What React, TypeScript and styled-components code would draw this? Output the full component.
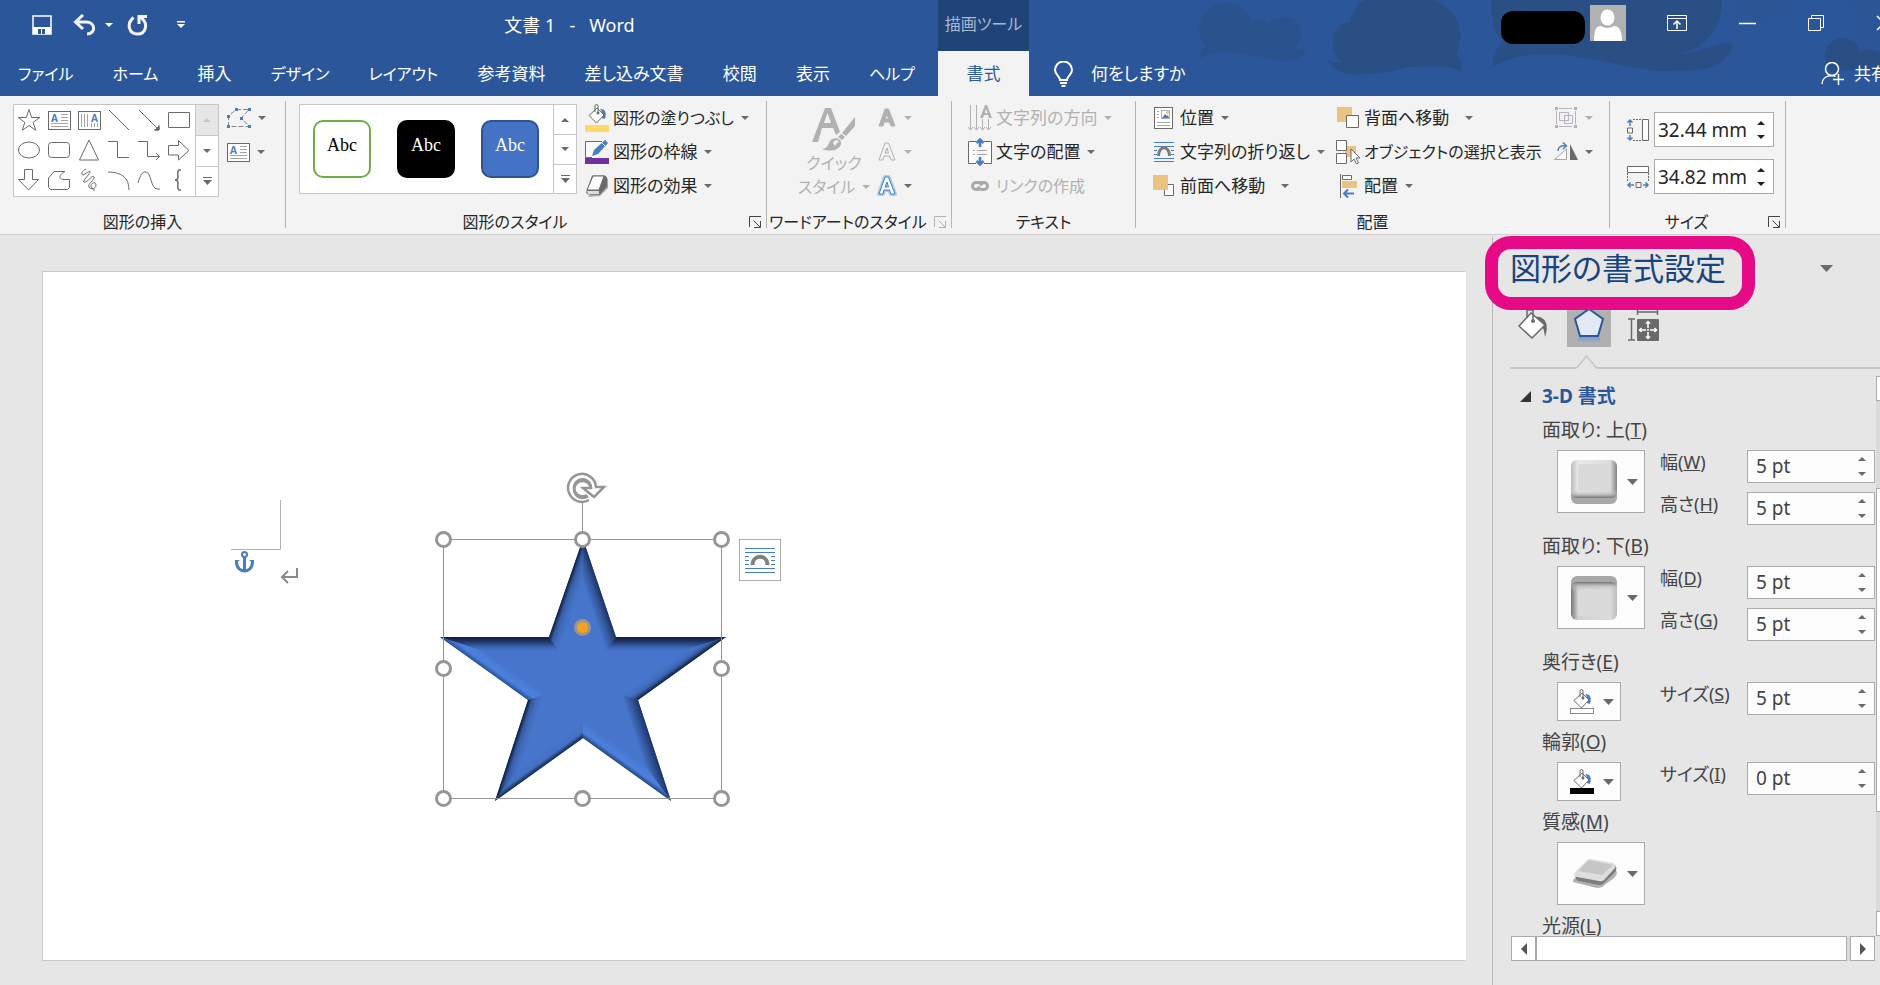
import React from 'react';
import styled, { createGlobalStyle } from 'styled-components';

const GlobalStyle = createGlobalStyle`
  * { box-sizing: border-box; }
  body {
    margin: 0;
    background: #e6e6e6;
    font-family: "Noto Sans", "Noto Sans CJK JP", sans-serif;
    font-size: 17px;
    line-height: 24px;
    color: #262626;
    font-feature-settings: "palt";
  }
  button, input { font: inherit; color: inherit; font-feature-settings: inherit; }
  button { padding: 0; border: 0; background: none; white-space: nowrap; cursor: pointer; }
  svg { display: block; flex: none; }
`;

/* ---------- Shell ---------- */

const Shell = styled.div`
  display: flex;
  flex-direction: column;
  height: 100vh;
  overflow: hidden;
`;

const Header = styled.header`
  position: relative;
  display: flex;
  flex: none;
  height: 96px;
  overflow: hidden;
  background: #2b579a;
  color: #fff;
`;

const HeaderArt = styled.svg`
  position: absolute;
  top: 0;
  right: 0;
`;

const HeaderLeft = styled.div`
  position: relative;
  flex: 0 0 938px;
`;

const TitleBar = styled.div`
  display: flex;
  align-items: center;
  height: 51px;
  padding-bottom: 2px;
`;

const QuickAccess = styled.div`
  display: flex;
  align-items: center;
  width: 201px;
  padding-left: 32px;
`;

const QuickButton = styled.button<{ $gap: number }>`
  margin-right: ${(p) => p.$gap}px;
`;

const DocTitle = styled.h1`
  flex: 1;
  margin: 0;
  font-size: 18px;
  font-weight: 400;
  text-align: center;
  white-space: pre;
`;

const TabList = styled.nav`
  display: flex;
  justify-content: space-between;
  height: 45px;
  padding: 0 23px 0 18px;
`;

const Tab = styled.button<{ $dense: boolean }>`
  font-size: ${(p) => (p.$dense ? 16 : 17)}px;
`;

const ContextGroup = styled.div`
  position: relative;
  display: flex;
  flex-direction: column;
  flex: 0 0 91px;
`;

const ContextLabel = styled.div`
  height: 51px;
  background: #214478;
  color: #a9b9d3;
  font-size: 16px;
  line-height: 48px;
  text-align: center;
  white-space: nowrap;
`;

const ActiveTab = styled.button`
  height: 45px;
  background: #f3f3f3;
  color: #2b579a;
`;

const HeaderRight = styled.div`
  position: relative;
  flex: 1;
  min-width: 0;
`;

const WindowBar = styled.div`
  display: flex;
  justify-content: flex-end;
  align-items: center;
  height: 51px;
  margin-right: -12px;
  padding-bottom: 5px;
`;

const Account = styled.div`
  display: flex;
  align-items: center;
  gap: 5px;
  margin-right: 41px;
`;

const NamePlate = styled.div`
  width: 84px;
  height: 33px;
  margin-top: 8px;
  border-radius: 12px;
  background: #000;
`;

const WindowButtons = styled.div`
  display: flex;
  align-items: center;
  gap: 52px;
`;

const TellMeBar = styled.div`
  display: flex;
  justify-content: space-between;
  height: 45px;
  margin-right: -8px;
  padding-left: 25px;
`;

const TellMe = styled.button<{ $gap: number }>`
  display: flex;
  align-items: center;
  gap: ${(p) => p.$gap}px;
`;

/* ---------- Ribbon ---------- */

const Ribbon = styled.div`
  display: flex;
  flex: none;
  height: 139px;
  border-bottom: 1px solid #d0cece;
  background: #f3f3f3;
`;

const Group = styled.section<{ $width: number }>`
  display: flex;
  flex-direction: column;
  flex: 0 0 ${(p) => p.$width}px;
  min-width: 0;
`;

const Separator = styled.div`
  flex: none;
  width: 1px;
  height: 127px;
  margin-top: 5px;
  background: #b4b4b4;
`;

const GroupBody = styled.div<{ $top?: number; $left: number; $gap?: number }>`
  display: flex;
  align-items: flex-start;
  gap: ${(p) => p.$gap ?? 8}px;
  height: 114px;
  padding: ${(p) => p.$top ?? 5}px 0 0 ${(p) => p.$left}px;
`;

const GroupFooter = styled.div`
  display: flex;
  align-items: center;
  height: 24px;
`;

const GroupName = styled.div`
  flex: 1;
  font-size: 16px;
  text-align: center;
  white-space: nowrap;
`;

const Launcher = styled.button`
  width: 22px;
  padding-left: 5px;
`;

const Gallery = styled.div<{ $height: number }>`
  display: flex;
  height: ${(p) => p.$height}px;
  margin-top: 3px;
  border: 1px solid #c6c6c6;
  background: #fff;
`;

const ShapeGrid = styled.div`
  display: grid;
  grid-template-columns: repeat(6, 30px);
  grid-auto-rows: 30px;
  width: 181px;
`;

const ShapeCell = styled.button`
  display: grid;
  place-items: center;
`;

const GalleryScroll = styled.div`
  display: grid;
  grid-template-rows: 1fr 1fr 1fr;
  width: 23px;
  border-left: 1px solid #c6c6c6;
`;

const ScrollCell = styled.button<{ $off?: boolean }>`
  display: grid;
  place-items: center;
  background: ${(p) => (p.$off ? '#e6e6e6' : '#fff')};
  & + & { border-top: 1px solid #c6c6c6; }
`;

const StyleList = styled.div`
  display: flex;
  align-items: center;
  gap: 26px;
  width: 253px;
  padding-left: 13px;
`;

const StyleSwatch = styled.button<{ $fill: string; $line: string; $ink: string }>`
  width: 58px;
  height: 58px;
  padding-bottom: 8px;
  border: 2px solid ${(p) => p.$line};
  border-radius: 10px;
  background: ${(p) => p.$fill};
  color: ${(p) => p.$ink};
  font-family: "Liberation Serif", serif;
  font-size: 18px;
`;

const CommandColumn = styled.div<{ $width?: number }>`
  display: flex;
  flex-direction: column;
  align-items: flex-start;
  width: ${(p) => (p.$width ? `${p.$width}px` : 'auto')};
`;

const CommandButton = styled.button<{ $off?: boolean; $split?: boolean; $dense?: boolean }>`
  display: flex;
  align-items: center;
  height: 34px;
  color: ${(p) => (p.$off ? '#b1b1b1' : '#262626')};
  font-size: ${(p) => (p.$dense ? 16 : 17)}px;
  > span { margin: 0 ${(p) => (p.$split ? 16 : 7)}px 0 4px; }
`;

const IconCommand = styled.button`
  display: flex;
  align-items: center;
  gap: 7px;
  height: 34px;
`;

const QuickStyle = styled.button`
  display: flex;
  flex-direction: column;
  align-items: center;
  width: 86px;
  padding-top: 6px;
  color: #b1b1b1;
  font-size: 16px;
  line-height: 24px;
`;

const QuickStyleLine = styled.span`
  display: flex;
  align-items: center;
  gap: 7px;
`;

const SizeList = styled.div`
  display: flex;
  flex-direction: column;
  gap: 12px;
`;

const SizeRow = styled.label`
  display: flex;
  align-items: center;
  gap: 4px;
`;

const SizeBox = styled.span`
  display: flex;
  align-items: center;
  width: 120px;
  height: 35px;
  border: 1px solid #ababab;
  background: #fff;
`;

const SizeInput = styled.input`
  flex: 1;
  min-width: 0;
  padding: 0 0 0 3px;
  border: 0;
  background: none;
  font-size: 19px;
  outline: 0;
`;

const Spin = styled.span<{ $gap: number }>`
  display: flex;
  flex-direction: column;
  gap: ${(p) => p.$gap}px;
  margin-right: 8px;
`;

/* ---------- Document ---------- */

const Workspace = styled.div`
  display: flex;
  flex: 1;
  min-height: 0;
`;

const Desk = styled.main`
  display: flex;
  flex: 1;
  min-width: 0;
  padding: 36px 26px 24px 42px;
`;

const Paper = styled.div`
  position: relative;
  flex: 1;
  overflow: hidden;
  border: 1px solid #c8c8c8;
  border-right-color: #fff;
  background: #fff;
`;

const Placed = styled.div<{ $x: number; $y: number }>`
  position: absolute;
  left: ${(p) => p.$x}px;
  top: ${(p) => p.$y}px;
`;

const LayoutOptions = styled.button`
  display: grid;
  place-items: center;
  width: 42px;
  height: 42px;
  border: 1px solid #ababab;
  background: #fff;
`;

/* ---------- Format pane ---------- */

const Pane = styled.aside`
  position: relative;
  display: flex;
  flex-direction: column;
  flex: 0 0 388px;
  min-width: 0;
  margin-top: 2px;
  padding-left: 17px;
  border-left: 1px solid #b9b9b9;
  color: #444;
`;

const PaneHeader = styled.div`
  display: flex;
  align-items: center;
  justify-content: space-between;
  height: 62px;
  padding-right: 47px;
`;

const PaneTitle = styled.h2`
  margin: 0;
  color: #17447f;
  font-size: 31px;
  font-weight: 400;
  line-height: 40px;
  white-space: nowrap;
`;

const Highlight = styled.div`
  position: absolute;
  top: -1px;
  left: -8px;
  width: 270px;
  height: 74px;
  border: 13px solid #e60a87;
  border-radius: 26px;
`;

const PaneTabs = styled.div`
  display: flex;
  gap: 10px;
  padding: 3px 0 0 3px;
`;

const PaneTab = styled.button<{ $on?: boolean }>`
  display: grid;
  place-items: center;
  width: 44px;
  height: 45px;
  background: ${(p) => (p.$on ? '#b0b0b0' : 'none')};
`;

const Divider = styled.div`
  position: relative;
  height: 22px;
  border-bottom: 2px solid #c6c6c6;
  > svg { position: absolute; left: 66px; bottom: -2px; }
`;

const PaneBody = styled.div`
  display: flex;
  flex: 1;
  min-height: 0;
  gap: 1px;
`;

const Settings = styled.div`
  flex: 1;
  min-width: 0;
  overflow: hidden;
  padding-top: 14px;
  font-size: 18px;
`;

const SectionToggle = styled.button`
  display: flex;
  align-items: center;
  gap: 11px;
  height: 26px;
  padding-left: 10px;
  color: #2b579a;
  font-size: 19px;
  font-weight: 700;
`;

const Caption = styled.div`
  padding: 11px 0 10px 32px;
  font-size: 19px;
  line-height: 20px;
`;

const SettingRow = styled.div`
  display: flex;
  padding-left: 47px;
`;

const PickerCell = styled.div`
  width: 103px;
`;

const Picker = styled.button<{ $small?: boolean }>`
  display: flex;
  align-items: center;
  justify-content: space-between;
  width: ${(p) => (p.$small ? 64 : 88)}px;
  height: ${(p) => (p.$small ? 39 : 63)}px;
  padding: 0 6px 0 ${(p) => (p.$small ? 11 : 12)}px;
  border: 1px solid #ababab;
  background: #fdfdfd;
`;

const Fields = styled.div`
  display: flex;
  flex: 1;
  flex-direction: column;
  gap: 9px;
  min-width: 0;
`;

const Field = styled.div`
  display: flex;
`;

const FieldLabel = styled.label`
  flex: 0 0 87px;
  white-space: nowrap;
`;

const FieldBox = styled.span`
  display: flex;
  flex: 1;
  align-items: center;
  min-width: 0;
  height: 33px;
  border: 1px solid #ababab;
  background: #fdfdfd;
`;

const FieldInput = styled.input`
  flex: 1;
  min-width: 0;
  padding: 0 0 2px 8px;
  border: 0;
  background: none;
  font-size: 19px;
  outline: 0;
`;

const VerticalScroll = styled.div`
  display: flex;
  flex: 0 0 4px;
  flex-direction: column;
  margin-top: 7px;
  overflow: hidden;
  background: #dadada;
`;

const VerticalPart = styled.span<{ $size?: number; $grow?: number; $track?: boolean }>`
  flex: ${(p) => (p.$grow ? `${p.$grow} 1 0` : `0 0 ${p.$size}px`)};
  border: ${(p) => (p.$track ? '0' : '1px solid #ababab')};
  border-right: 0;
  background: ${(p) => (p.$track ? 'none' : '#fff')};
`;

const HorizontalScroll = styled.div`
  display: flex;
  flex: none;
  margin: 0 5px 24px 1px;
  background: #dadada;
`;

const HorizontalButton = styled.button`
  display: grid;
  place-items: center;
  width: 25px;
  height: 25px;
  border: 1px solid #ababab;
  background: #fff;
`;

const HorizontalThumb = styled.span`
  flex: 1;
  margin-right: 3px;
  border: 1px solid #ababab;
  background: #fff;
`;

/* ---------- Icons ---------- */

const GREY = '#6a6a6a';
const BLUE = '#4a7ebb';
const GOLD = '#eac282';

type IconProps = { w: number; h: number; children: React.ReactNode; stroke?: string; sw?: number };
const Icon = ({ w, h, children, stroke = 'none', sw = 1 }: IconProps) => (
  <svg width={w} height={h} viewBox={`0 0 ${w} ${h}`} fill="none" stroke={stroke} strokeWidth={sw} aria-hidden="true">
    {children}
  </svg>
);

const Caret = ({ color = '#6a6a6a', w = 8, h = 4, up = false }: { color?: string; w?: number; h?: number; up?: boolean }) => (
  <svg width={w} height={h} viewBox="0 0 8 4" preserveAspectRatio="none" aria-hidden="true">
    <path d={up ? 'M0 4h8L4 0z' : 'M0 0h8L4 4z'} fill={color} />
  </svg>
);

const MoreCaret = ({ color = '#6a6a6a' }: { color?: string }) => (
  <Icon w={9} h={8}><path d="M0 0h9v1H0zM0 3h9L4.500 8z" fill={color} /></Icon>
);

const LetterA = ({ x, y, size, color }: { x: number; y: number; size: number; color: string }) => (
  <text x={x} y={y} fontSize={size} fontWeight="700" fontFamily="Noto Sans, sans-serif" fill={color} stroke="none">A</text>
);

const TextBoxIcon = () => (
  <Icon w={23} h={19} stroke={GREY}>
    <rect x="0.5" y="0.5" width="22" height="18" fill="#fff" />
    <LetterA x={3} y={11} size={10} color={BLUE} />
    <path d="M13 3.500h7M13 6.500h7M13 9.500h7M3 12.500h17M3 15.500h17" stroke="#a5a5a5" />
  </Icon>
);

const shapes: [string, React.ReactNode][] = [
  ['星', <Icon w={24} h={24} stroke={GREY}><path d="M12 1.500l2.600 8h8.200l-6.600 4.800 2.500 8L12 17.500l-6.700 4.800 2.500-8L1.200 9.500h8.200z" /></Icon>],
  ['テキスト ボックス', <TextBoxIcon />],
  ['縦書きテキスト ボックス', (
    <Icon w={23} h={19} stroke={GREY}>
      <rect x="0.500" y="0.500" width="22" height="18" fill="#fff" />
      <LetterA x={13} y={11} size={10} color={BLUE} />
      <path d="M3.500 3v13M6.500 3v13M9.500 3v13M13.500 12v4M16.500 12v4M19.500 12v4" stroke="#a5a5a5" />
    </Icon>
  )],
  ['直線', <Icon w={24} h={24} stroke={GREY}><path d="M2 2l20 20" /></Icon>],
  ['矢印', <Icon w={24} h={24} stroke={GREY}><path d="M2 2l20 20M22 17v5h-5" /><path d="M22 18v4h-4z" fill={GREY} /></Icon>],
  ['四角形', <Icon w={24} h={24} stroke={GREY}><path d="M1.500 4.500h21v15h-21z" /></Icon>],
  ['楕円', <Icon w={24} h={24} stroke={GREY}><ellipse cx="12" cy="12" rx="10.500" ry="8" /></Icon>],
  ['角丸四角形', <Icon w={24} h={24} stroke={GREY}><rect x="1.500" y="4.500" width="21" height="15" rx="3" /></Icon>],
  ['三角形', <Icon w={24} h={24} stroke={GREY}><path d="M12 2l9.500 20h-19z" /></Icon>],
  ['カギ線', <Icon w={24} h={24} stroke={GREY}><path d="M1 3.500h9.500v16H22" /></Icon>],
  ['カギ線矢印', <Icon w={24} h={24} stroke={GREY}><path d="M1 3.500h9.500v15H22M19 15l3.500 3.500L19 22" /></Icon>],
  ['右矢印', <Icon w={24} h={24} stroke={GREY}><path d="M1.500 7.500h10v-5L22 12.500l-10.500 9.500v-5h-10z" /></Icon>],
  ['下矢印', <Icon w={24} h={24} stroke={GREY}><path d="M7.500 1.500h8v10h6L11.500 22 1.500 11.500h6z" /></Icon>],
  ['フリーフォーム', <Icon w={24} h={24} stroke={GREY}><path d="M7 3.500h11c-6 3-7 8-1 8h5.500v8l-2 2h-17l-2-2V10z" /></Icon>],
  ['スケッチ', <Icon w={24} h={24} stroke={GREY}><path d="M9 1C3 4 4 9 8 6s7-4 4 0-8 9-4 8 8-8 9-5-7 7-5 10 7 2 7-2-5-2-5 1 4 2 3 5" /></Icon>],
  ['円弧', <Icon w={24} h={24} stroke={GREY}><path d="M1 4c14 0 21 6 21 18" /></Icon>],
  ['曲線', <Icon w={24} h={24} stroke={GREY}><path d="M1 15C3 7 6 3 9 4c5 0 5 17 11 17h3" /></Icon>],
  ['中かっこ', <Icon w={24} h={24} stroke={GREY}><path d="M14 2h-2c-2 1-1 5-1 7s-1 3-3 3c2 0 3 1 3 3s-1 6 1 7h2" strokeWidth="1.500" /></Icon>],
];

const Bucket = ({ x = 0, y = 0, pour = BLUE }: { x?: number; y?: number; pour?: string }) => (
  <g transform={`translate(${x} ${y})`}>
    <path d="M12 5c5 0 7 3 5 10l-3-1c1-4 0-7-2-9z" fill={pour} />
    <path d="M1 11.500L9 4l7 7-7.500 8z" fill="#fff" stroke={GREY} />
    <path d="M7 8V2q0-1.500 1.500-1.500T10 2v7" stroke={GREY} />
    <circle cx="10" cy="9" r="1.500" fill={GREY} />
  </g>
);

const FillIcon = () => (
  <Icon w={24} h={28}><Bucket x={3} y={0} /><path d="M0 21h24v7H0z" fill="#ffd966" /></Icon>
);

const OutlineIcon = () => (
  <Icon w={24} h={26}>
    <path d="M17 2.500H.5v16H7" stroke={GREY} fill="#fafafa" />
    <path d="M7 17l2-6L20 1l3 3-10 11z" fill={BLUE} /><path d="M17 4l3 3" stroke="#f3f3f3" />
    <path d="M0 19h24v6H0z" fill="#7030a0" />
  </Icon>
);

const EffectIcon = () => (
  <Icon w={24} h={24}>
    <path d="M3 23l12-1 8-8V5l-3-3z" fill="#a9a9a9" />
    <path d="M7 1.500h13l2 2v9l-7 8H3l-2-2z" fill={GREY} />
    <path d="M8 2h11L14 16H2z" fill="#fff" stroke={GREY} />
    <path d="M2 17h12v3H3z" fill="#ddd" />
  </Icon>
);

const EditShapeIcon = () => (
  <Icon w={24} h={21} stroke="#8a8a8a">
    <path d="M1.500 19V7.500L9.500 1.500H22L14.500 10l8 8.500h-21" strokeDasharray="5 2" />
    <path d="M8 0h3v3H8zM21 0h3v3h-3zM0 7h3v3H0zM13 9h3v3h-3zM0 17h3v3H0zM21 17h3v3h-3z" fill={BLUE} stroke="none" />
  </Icon>
);

const QuickStyleIcon = () => (
  <Icon w={44} h={44}>
    <path d="M0 35L13 1h6l9 24-4 3-3-7H10L6 35zM12 16h7L15.500 6z" fill="#b1b1b1" />
    <path d="M43 10v9l-9 10-4-3zM29 27l4 3-3 3-4-3z" fill="#b1b1b1" />
    <path d="M10 42c5 0 6-4 8-8 3-5 12-3 11 3-2 7-12 8-19 5z" fill="#b1b1b1" />
    <path d="M21 36c1-3 5-4 6-1-2 0-3 3-4 4z" fill="#f3f3f3" />
  </Icon>
);

const WordArtIcon = ({ fill, line, glow }: { fill: string; line: string; glow?: boolean }) => (
  <Icon w={20} h={22}>
    <g strokeLinejoin="round">
      {glow && <path d="M2 19L8 2h3.500L18 19h-4l-1.500-4H7l-1 4zM8 12h3.500L10 7z" stroke="#a9cdf0" strokeWidth="4" />}
      <path d="M2 19L8 2h3.500L18 19h-4l-1.500-4H7l-1 4zM8 12h3.500L10 7z" fill={fill} stroke={line} fillRule="evenodd" />
    </g>
  </Icon>
);

const TextDirectionIcon = () => (
  <Icon w={24} h={28} stroke="#b1b1b1">
    <path d="M2.500 1v25M8.500 1v25M14.500 15v11M20.500 15v11M0 23l2.500 3L5 23M6 23l2.500 3L11 23M12 23l2.500 3 2.500-3M18 23l2.500 3 2.500-3" />
    <path d="M12 14l5-13h2l5 13h-3l-1-3h-4l-1 3zM17 9h2.500L18 4.500z" fill="#b1b1b1" fillRule="evenodd" stroke="none" />
  </Icon>
);

const TextAlignIcon = () => (
  <Icon w={24} h={28} stroke={GREY}>
    <path d="M8 3.500H.5v22H8M16 3.500h7.500v22H16" fill="#fff" />
    <path d="M5 12.500h2m2 0h10M5 16.500h2m2 0h10" stroke="#a5a5a5" />
    <path d="M12 9V2M8.500 5L12 1.500 15.500 5M12 19v7M8.500 23l3.500 3.500 3.500-3.500" stroke={BLUE} strokeWidth="2.500" />
  </Icon>
);

const LinkIcon = () => (
  <Icon w={24} h={14} stroke="#a9a9a9" sw={3}>
    <path d="M11 10.500H8a3.500 3.500 0 0 1 0-7h2q3 0 4 3" /><path d="M12 3.500h4a3.500 3.500 0 0 1 0 7h-2q-3 0-4-3" />
  </Icon>
);

const PositionIcon = () => (
  <Icon w={24} h={24} stroke={GREY}>
    <rect x="2.500" y="1.500" width="18" height="21" fill="#fff" />
    <path d="M5 5.500h2M5 8.500h2M5 11.500h2M5 16.500h13M5 19.500h13" stroke="#a5a5a5" />
    <rect x="9.500" y="4.500" width="8" height="8" stroke="#b0b0b0" />
    <path d="M10 12l3-4 2 2 1-1 1 3z" fill={BLUE} stroke="none" /><circle cx="15.500" cy="6.500" r="1.500" fill={GOLD} stroke="none" />
  </Icon>
);

const WrapIcon = () => (
  <Icon w={24} h={24}>
    <path d="M2 2.500h20M2 6.500h20M2 10.500h3M19 10.500h3M2 14.500h3M19 14.500h3M2 18.500h20M2 21.500h20" stroke={BLUE} />
    <path d="M6.500 16c0-11 11-11 11 0" stroke="#7a7a7a" strokeWidth="3" />
  </Icon>
);

const LayoutIcon = () => (
  <Icon w={30} h={26}>
    <path d="M0 1.500h30M0 5.500h30M0 9.500h4M26 9.500h4M0 13.500h4M26 13.500h4M0 17.500h4M26 17.500h4M0 21.500h30M0 25.500h30" stroke={BLUE} />
    <path d="M7.500 18c0-11 15-11 15 0" stroke="#808080" strokeWidth="4" />
  </Icon>
);

const ForwardIcon = () => (
  <Icon w={24} h={24}><path d="M12.500 10.500h9v11h-9z" fill="#fff" stroke={GREY} /><path d="M1 1h15v15H1z" fill={GOLD} /></Icon>
);

const BackwardIcon = () => (
  <Icon w={24} h={24}><path d="M1 1h15v15H1z" fill={GOLD} /><path d="M10.500 9.500h12v12h-12z" fill="#fff" stroke={GREY} /></Icon>
);

const SelectionIcon = () => (
  <Icon w={24} h={26}>
    <path d="M9 7h11v11H9z" fill={GOLD} />
    <path d="M.5 1.500h10v10H.5zM.5 14.500h10v10H.5z" fill="#fff" stroke={GREY} />
    <path d="M15 10v13l3-3 2.500 5 2-1-2.500-5h4z" fill="#fff" stroke={GREY} />
  </Icon>
);

const AlignIcon = () => (
  <Icon w={24} h={26}>
    <path d="M4.500 1v24" stroke={GREY} /><path d="M6.500 2.500h9v4h-9z" fill="#fff" stroke={GREY} /><path d="M6 8h15v7H6z" fill={GOLD} />
    <path d="M18 20.500H8M12 16.500l-4 4 4 4" stroke={BLUE} strokeWidth="2" />
  </Icon>
);

const GroupIcon = () => (
  <Icon w={24} h={24} stroke="#b9b3bd">
    <path d="M5 2.500h13M5 20.500h13M2.500 5v13M21.500 5v13" /><path d="M5.500 6.500h9v8h-9zM10.500 9.500h8v8h-8z" fill="#f3eef6" />
    <path d="M10.500 9.500h4v5h-4z" />
    <path d="M1 1h3v3H1zM20 1h3v3h-3zM1 19h3v3H1zM20 19h3v3h-3z" fill="#b1b1b1" stroke="none" />
  </Icon>
);

const RotateIcon = () => (
  <Icon w={24} h={20}>
    <path d="M.5 17.500h12V7z" fill="#fff" stroke="#a5a5a5" /><path d="M16 2v16h8z" fill={GREY} />
    <path d="M4 9c0-4 3-6 8-5M9 .5L12.500 4 9 7" stroke={BLUE} strokeWidth="1.500" />
  </Icon>
);

const HeightIcon = () => (
  <Icon w={24} h={24} stroke={GREY}>
    <path d="M16.500 1.500h6v21h-6z" fill="#fff" /><path d="M7 1.500h9M7 22.500h9" strokeDasharray="2 1" /><path d="M1.500 10h5v5h-5z" />
    <path d="M4 8V2M1.500 4.500L4 2l2.500 2.500M4 17v5M1.500 19.500L4 22l2.500-2.500" stroke={BLUE} strokeWidth="1.500" />
  </Icon>
);

const WidthIcon = () => (
  <Icon w={24} h={24} stroke={GREY}>
    <path d="M1.500 1.500h21v6h-21z" fill="#fff" /><path d="M1.500 8v8M22.500 8v8" strokeDasharray="2 1" /><path d="M10 17.500h5v5h-5z" />
    <path d="M8 20H2M4.500 17.500L2 20l2.500 2.500M17 20h5M19.500 17.500L22 20l-2.500 2.500" stroke={BLUE} strokeWidth="1.500" />
  </Icon>
);

const LauncherIcon = ({ color }: { color: string }) => (
  <Icon w={13} h={12} stroke={color}><path d="M.5 11V.5H12M4.500 4.500L11 11M11.500 5v6.500H5" /></Icon>
);

/* ---------- Bevelled star ---------- */

type Point = [number, number];
const starPoints: Point[] = [
  [143, 46], [176, 144], [286, 144], [198, 207], [231, 308],
  [143, 245], [55, 308], [88, 207], [0, 144], [109, 144],
];
const BASE = '#4775cb';
const bevelTones: [number, string][][] = [
  [[0, '#1b3260'], [0.450, '#33579a']],
  [[0, '#101e3c'], [0.300, '#1d3463'], [0.700, '#3a62ad']],
  [[0, '#101e3c'], [0.350, '#3a62ab'], [0.600, '#4370c3']],
  [[0, '#1c3564'], [0.450, '#30549a']],
  [[0, '#26457f'], [0.350, '#4a80dc'], [0.600, '#4a7ed8']],
  [[0, '#142545'], [0.350, '#4270c2'], [0.500, '#4572c6']],
  [[0, '#0e1a34'], [0.300, '#365ba2'], [0.600, '#416cbb']],
  [[0, '#2b4e90'], [0.350, '#4a80dc'], [0.700, '#4a7ed8']],
  [[0, '#101e3c'], [0.300, '#1d3463'], [0.700, '#3a62ad']],
  [[0, '#0e1a34'], [0.300, '#365ba2'], [0.600, '#416cbb']],
];
const DEPTH = 14;

const inwardNormal = (a: Point, b: Point): Point => {
  const length = Math.hypot(b[0] - a[0], b[1] - a[1]);
  return [-(b[1] - a[1]) / length, (b[0] - a[0]) / length];
};

const insetPoints: Point[] = starPoints.map((point, i) => {
  const before = inwardNormal(starPoints[(i + 9) % 10], point);
  const after = inwardNormal(point, starPoints[(i + 1) % 10]);
  const scale = DEPTH / (1 + before[0] * after[0] + before[1] * after[1]);
  return [point[0] + (before[0] + after[0]) * scale, point[1] + (before[1] + after[1]) * scale];
});

const Handle = ({ x, y }: { x: number; y: number }) => (
  <circle cx={x} cy={y} r="7" fill="#fff" stroke="#969696" strokeWidth="3" />
);

const StarShape = () => (
  <svg width="300" height="350" viewBox="-8 -26 300 350" role="img" aria-label="星">
    <defs>
      {starPoints.map((a, i) => {
        const b = starPoints[(i + 1) % 10];
        const n = inwardNormal(a, b);
        return (
          <linearGradient key={i} id={`bevel${i}`} gradientUnits="userSpaceOnUse" x1={a[0]} y1={a[1]} x2={a[0] + n[0] * DEPTH} y2={a[1] + n[1] * DEPTH}>
            {bevelTones[i].map(([offset, color]) => <stop key={offset} offset={offset} stopColor={color} />)}
            <stop offset="1" stopColor={BASE} />
          </linearGradient>
        );
      })}
    </defs>
    <polygon points={starPoints.join(' ')} fill={BASE} />
    {starPoints.map((a, i) => {
      const j = (i + 1) % 10;
      return <polygon key={i} points={[a, starPoints[j], insetPoints[j], insetPoints[i]].join(' ')} fill={`url(#bevel${i})`} />;
    })}
    <path d="M3.500 46.500h278v259h-278zM142.500 46V10" fill="none" stroke="#969696" />
    {[[3.500, 46.500], [142.500, 46.500], [281.500, 46.500], [3.500, 175.500], [281.500, 175.500], [3.500, 305.500], [142.500, 305.500], [281.500, 305.500]].map(([x, y]) => (
      <Handle key={`${x}-${y}`} x={x} y={y} />
    ))}
    <circle cx="142.500" cy="134.500" r="7" fill="#f5a31a" stroke="#969696" strokeWidth="3" />
    <g fill="none" stroke="#969696" strokeWidth="2.500" transform="translate(0 1)">
      <path d="M149 6a14 14 0 1 1 7-13h8L154 3l-11-9h8a8.500 8.500 0 1 0-3 8" fill="#fff" />
      <path d="M147 1a8.500 8.500 0 1 1 4-7" />
    </g>
  </svg>
);

/* ---------- Pieces ---------- */

type CommandProps = { icon: React.ReactNode; text: string; caret?: boolean; off?: boolean; split?: boolean; dense?: boolean };
const Command = ({ icon, text, caret = true, off, split, dense }: CommandProps) => (
  <CommandButton $off={off} $split={split} $dense={dense} disabled={off}>
    {icon}
    <span>{text}</span>
    {caret && <Caret color={off ? '#b1b1b1' : '#6a6a6a'} />}
  </CommandButton>
);

const GalleryScroller = ({ top }: { top?: boolean }) => (
  <GalleryScroll>
    <ScrollCell $off={top} aria-label="上へ"><Caret up color={top ? '#c6c6c6' : '#6a6a6a'} /></ScrollCell>
    <ScrollCell aria-label="下へ"><Caret /></ScrollCell>
    <ScrollCell aria-label="その他"><MoreCaret /></ScrollCell>
  </GalleryScroll>
);

const Footer = ({ name, launcher }: { name: string; launcher?: string }) => (
  <GroupFooter>
    <GroupName>{name}</GroupName>
    {launcher && <Launcher aria-label={`${name}の詳細`}><LauncherIcon color={launcher} /></Launcher>}
  </GroupFooter>
);

const Spinner = ({ gap, color }: { gap: number; color: string }) => (
  <Spin $gap={gap}>
    <button aria-label="増やす" type="button"><Caret up color={color} /></button>
    <button aria-label="減らす" type="button"><Caret color={color} /></button>
  </Spin>
);

type FieldProps = { id: string; name: string; letter: string; value: string };
const SettingField = ({ id, name, letter, value }: FieldProps) => (
  <Field>
    <FieldLabel htmlFor={id}>{name}(<u>{letter}</u>)</FieldLabel>
    <FieldBox><FieldInput id={id} defaultValue={value} /><Spinner gap={11} color="#6a6a6a" /></FieldBox>
  </Field>
);

const BevelPreview = ({ flip }: { flip?: boolean }) => {
  const side = flip ? 'bevelSideLow' : 'bevelSideTop';
  const fade = flip ? 'bevelFadeLow' : 'bevelFadeTop';
  return (
    <Icon w={48} h={46}>
      <defs>
        <linearGradient id={side} x1="0" x2="1" y1="0" y2="0">
          <stop offset="0" stopColor={flip ? '#777' : '#bbb'} /><stop offset="0.150" stopColor={flip ? '#d2d2d2' : '#e9e9e9'} />
          <stop offset="0.850" stopColor="#dcdcdc" /><stop offset="1" stopColor={flip ? '#bbb' : '#858585'} />
        </linearGradient>
        <linearGradient id={fade} x1="0" x2="0" y1="0" y2="1">
          <stop offset="0" stopColor="#d9d9d9" stopOpacity="0" /><stop offset="0.600" stopColor="#aaa" stopOpacity="0.600" /><stop offset="1" stopColor="#707070" />
        </linearGradient>
      </defs>
      <g transform={flip ? 'translate(0 46) scale(1 -1)' : undefined}>
        <rect x="1" y="6" width="46" height="39" rx="6" fill="#a8a8a8" />
        <rect x="1" y="1" width="46" height="38" rx="6" fill={`url(#${side})`} />
        <path d="M1 30h46v3q0 6-6 6H7q-6 0-6-6z" fill={`url(#${fade})`} />
        <rect x="8" y="5" width="32" height="27" rx="3" fill="#dadada" />
      </g>
    </Icon>
  );
};

const MaterialPreview = () => (
  <Icon w={48} h={46}>
    <path d="M3 31q0-4 4-5l37-9 3 4q0 3-3 6L32 36q-2 1-5 1z" fill="#b0b0b0" />
    <path d="M5 22l1 6q1 2 3 2l20 4q3 0 5-2l11-11q2-2 1-6z" fill="#7c7c7c" />
    <path d="M5 21L17 9q2-1 4-1l22 4q4 1 2 5L34 29q-2 2-5 1L7 26q-4-1-2-5z" fill="#dedede" />
    <path d="M8 20L19 9l24 5-11 10z" fill="#c6c6c6" />
  </Icon>
);

const ColorIcon = ({ bar }: { bar: string }) => (
  <Icon w={26} h={26}>
    <Bucket x={4} y={0} />
    <rect x="1.500" y="19.500" width="23" height="5" fill={bar} stroke={bar === '#fff' ? '#8a8a8a' : bar} />
  </Icon>
);

const tabs = [
  { name: 'ファイル', kana: true },
  { name: 'ホーム', kana: true },
  { name: '挿入', kana: false },
  { name: 'デザイン', kana: true },
  { name: 'レイアウト', kana: true },
  { name: '参考資料', kana: false },
  { name: '差し込み文書', kana: false },
  { name: '校閲', kana: false },
  { name: '表示', kana: false },
  { name: 'ヘルプ', kana: true },
];

export default function App() {
  return (
    <Shell>
      <GlobalStyle />
      <Header>
        <HeaderArt width="700" height="96" viewBox="1180 0 700 96" fill="#2a4f85" aria-hidden="true">
          <path opacity="0.600" d="M1199 59Q1200 50 1207 46 1199 40 1199 30C1199 15 1211 3 1227 3 1240 3 1249 11 1252 23Q1260 15 1268 24C1278 14 1301 14 1301 33Q1301 42 1293 49L1307 50Q1300 61 1287 61C1265 61 1225 43 1199 59z" />
          <path opacity="0.250" d="M1737 14Q1752 8 1762 24 1774 4 1786 24C1786 14 1790 5 1796 0H1737zM1850 0Q1860 18 1858 40L1880 46V0z" />
          <path d="M1327 60Q1335 63 1342 62C1326 48 1331 22 1350 22 1352 10 1358 3 1366 0H1433C1460 10 1466 35 1456 54Q1462 60 1462 72C1447 64 1425 67 1410 67 1395 70 1385 74 1367 74 1345 76 1336 72 1327 60z" />
          <path d="M1493 67Q1493 50 1503 42C1493 32 1490 14 1492 0H1722C1722 28 1706 48 1680 54 1700 54 1715 42 1731 43 1738 48 1722 62 1717 65 1700 73 1660 73 1630 67 1590 59 1530 43 1493 67z" />
          <path d="M1831 72C1818 56 1828 38 1843 38 1853 38 1859 45 1860 52Q1870 47 1880 52V72Q1856 68 1831 72z" />
        </HeaderArt>
        <HeaderLeft>
          <TitleBar>
            <QuickAccess>
              <QuickButton $gap={21} aria-label="上書き保存">
                <Icon w={20} h={20} stroke="#fff" sw={1.5}><path d="M1 1h18v18H1z" /><path d="M1 12h18v7H1z" fill="#fff" stroke="none" /><path d="M6 14h3v5H6zM10 14h3v5h-3z" fill="#2b579a" stroke="none" /></Icon>
              </QuickButton>
              <QuickButton $gap={8} aria-label="元に戻す">
                <Icon w={24} h={22} stroke="#f3f3f3" sw={3}><path d="M10 1L2.500 8l7.500 7M3 8h10c10 0 10 12 1 12" /></Icon>
              </QuickButton>
              <QuickButton $gap={14} aria-label="元に戻す履歴"><Caret color="#fff" /></QuickButton>
              <QuickButton $gap={28} aria-label="やり直し">
                <Icon w={22} h={22} stroke="#f3f3f3" sw={3}><path d="M6.500 3.500C-1 10 2 20 10.500 20S22 9 13.500 3.500" /><path d="M12 10V2.500h8" /></Icon>
              </QuickButton>
              <QuickButton $gap={0} aria-label="クイック アクセス ツール バーのカスタマイズ">
                <Icon w={8} h={7}><path d="M0 0h8v1.500H0zM0 3h8L4 7z" fill="#fff" /></Icon>
              </QuickButton>
            </QuickAccess>
            <DocTitle>{'文書 1   -   Word'}</DocTitle>
          </TitleBar>
          <TabList>{tabs.map(({ name, kana }) => <Tab key={name} $dense={kana}>{name}</Tab>)}</TabList>
        </HeaderLeft>
        <ContextGroup>
          <ContextLabel>描画ツール</ContextLabel>
          <ActiveTab>書式</ActiveTab>
        </ContextGroup>
        <HeaderRight>
          <WindowBar>
            <Account>
              <NamePlate />
              <Icon w={36} h={36}><path d="M0 0h36v36H0z" fill="#b1b1b1" /><ellipse cx="17.500" cy="12.500" rx="7" ry="8" fill="#fff" /><path d="M4 36c0-11 2-15 7-15q6 4 13 0c5 0 8 4 8 15z" fill="#fff" /></Icon>
            </Account>
            <WindowButtons>
              <button aria-label="リボンの表示オプション"><Icon w={20} h={16} stroke="#fff"><path d="M.5.500h19v15H.5zM.5 3.500h19" /><path d="M10 14V7M6.500 9.500L10 6l3.500 3.500" strokeWidth="1.500" /></Icon></button>
              <button aria-label="最小化"><Icon w={17} h={16} stroke="#fff"><path d="M0 8.500h17" strokeWidth="1.500" /></Icon></button>
              <button aria-label="元のサイズに戻す"><Icon w={16} h={16} stroke="#fff"><path d="M3.500 3V.5h12v12H13M.5 3.500h12v12H.5z" /></Icon></button>
              <button aria-label="閉じる"><Icon w={16} h={16} stroke="#fff" sw={1.5}><path d="M1 1l14 14M15 1L1 15" /></Icon></button>
            </WindowButtons>
          </WindowBar>
          <TellMeBar>
            <TellMe $gap={18}>
              <Icon w={19} h={26} stroke="#fff" sw={2}><path d="M6 19c0-4-5-5-5-10a8.300 8.300 0 0 1 17 0c0 5-5 6-5 10zM6 22h7M7.500 25h4" /></Icon>
              何をしますか
            </TellMe>
            <TellMe $gap={9}>
              <Icon w={24} h={24} stroke="#fff" sw={1.5}><circle cx="11" cy="7" r="6.500" /><path d="M1 22c0-5 4-8 9-8.500 2 0 3 0 4.500 1M17.500 12v11M12 17.500h11" /></Icon>
              共有
            </TellMe>
          </TellMeBar>
        </HeaderRight>
      </Header>

      <Ribbon>
        <Group $width={285}>
          <GroupBody $left={13}>
            <Gallery $height={93}>
              <ShapeGrid>{shapes.map(([name, icon]) => <ShapeCell key={name} aria-label={name}>{icon}</ShapeCell>)}</ShapeGrid>
              <GalleryScroller top />
            </Gallery>
            <CommandColumn>
              <IconCommand aria-label="図形の編集"><EditShapeIcon /><Caret /></IconCommand>
              <IconCommand aria-label="テキスト ボックスの描画"><TextBoxIcon /><Caret /></IconCommand>
            </CommandColumn>
          </GroupBody>
          <Footer name="図形の挿入" />
        </Group>
        <Separator />
        <Group $width={480}>
          <GroupBody $left={13}>
            <Gallery $height={90}>
              <StyleList>
                <StyleSwatch $fill="#fff" $line="#70ad47" $ink="#000">Abc</StyleSwatch>
                <StyleSwatch $fill="#000" $line="#000" $ink="#fff">Abc</StyleSwatch>
                <StyleSwatch $fill="#4472c4" $line="#2f528f" $ink="#fff">Abc</StyleSwatch>
              </StyleList>
              <GalleryScroller />
            </Gallery>
            <CommandColumn>
              <Command icon={<FillIcon />} text="図形の塗りつぶし" dense />
              <Command icon={<OutlineIcon />} text="図形の枠線" />
              <Command icon={<EffectIcon />} text="図形の効果" />
            </CommandColumn>
          </GroupBody>
          <Footer name="図形のスタイル" launcher="#444" />
        </Group>
        <Separator />
        <Group $width={184}>
          <GroupBody $left={24} $gap={0}>
            <QuickStyle disabled>
              <QuickStyleIcon />
              <QuickStyleLine>クイック</QuickStyleLine>
              <QuickStyleLine>スタイル<Caret color="#b1b1b1" /></QuickStyleLine>
            </QuickStyle>
            <CommandColumn>
              <IconCommand aria-label="文字の塗りつぶし" disabled><WordArtIcon fill="#b1b1b1" line="#b1b1b1" /><Caret color="#b1b1b1" /></IconCommand>
              <IconCommand aria-label="文字の輪郭" disabled><WordArtIcon fill="#f3f3f3" line="#b1b1b1" /><Caret color="#b1b1b1" /></IconCommand>
              <IconCommand aria-label="文字の効果"><WordArtIcon fill="#fff" line="#3f7fc4" glow /><Caret /></IconCommand>
            </CommandColumn>
          </GroupBody>
          <Footer name="ワードアートのスタイル" launcher="#b1b1b1" />
        </Group>
        <Separator />
        <Group $width={183}>
          <GroupBody $left={16}>
            <CommandColumn>
              <Command icon={<TextDirectionIcon />} text="文字列の方向" off />
              <Command icon={<TextAlignIcon />} text="文字の配置" />
              <Command icon={<LinkIcon />} text="リンクの作成" off caret={false} dense />
            </CommandColumn>
          </GroupBody>
          <Footer name="テキスト" />
        </Group>
        <Separator />
        <Group $width={473}>
          <GroupBody $left={16} $gap={0}>
            <CommandColumn $width={184}>
              <Command icon={<PositionIcon />} text="位置" />
              <Command icon={<WrapIcon />} text="文字列の折り返し" />
              <Command icon={<ForwardIcon />} text="前面へ移動" split />
            </CommandColumn>
            <CommandColumn $width={218}>
              <Command icon={<BackwardIcon />} text="背面へ移動" split />
              <Command icon={<SelectionIcon />} text="オブジェクトの選択と表示" caret={false} dense />
              <Command icon={<AlignIcon />} text="配置" />
            </CommandColumn>
            <CommandColumn>
              <IconCommand aria-label="グループ化" disabled><GroupIcon /><Caret color="#b1b1b1" /></IconCommand>
              <IconCommand aria-label="回転"><RotateIcon /><Caret /></IconCommand>
            </CommandColumn>
          </GroupBody>
          <Footer name="配置" />
        </Group>
        <Separator />
        <Group $width={175}>
          <GroupBody $top={16} $left={16}>
            <SizeList>
              <SizeRow><HeightIcon /><SizeBox><SizeInput aria-label="図形の高さ" defaultValue="32.44 mm" /><Spinner gap={10} color="#222" /></SizeBox></SizeRow>
              <SizeRow><WidthIcon /><SizeBox><SizeInput aria-label="図形の幅" defaultValue="34.82 mm" /><Spinner gap={10} color="#222" /></SizeBox></SizeRow>
            </SizeList>
          </GroupBody>
          <Footer name="サイズ" launcher="#444" />
        </Group>
        <Separator />
      </Ribbon>

      <Workspace>
        <Desk>
          <Paper>
            <Placed $x={188} $y={228}>
              <Icon w={70} h={86}>
                <path d="M49.500 0v49.500H0" stroke="#b0b0b0" />
                <g stroke={BLUE} strokeWidth="3"><circle cx="13.500" cy="54.500" r="2.500" strokeWidth="2" /><path d="M13.500 57v14" /><path d="M5.500 62c0 12 16 12 16 0" /></g>
                <path d="M4 64v-4h5zM23 64v-4h-5z" fill={BLUE} />
                <path d="M66 68v9H52M57 71l-6 6 6 6" stroke="#8a8a8a" strokeWidth="2" />
              </Icon>
            </Placed>
            <Placed $x={389} $y={195}><StarShape /></Placed>
            <Placed $x={696} $y={267}><LayoutOptions aria-label="レイアウト オプション"><LayoutIcon /></LayoutOptions></Placed>
          </Paper>
        </Desk>

        <Pane>
          <PaneHeader>
            <PaneTitle>図形の書式設定</PaneTitle>
            <button aria-label="作業ウィンドウ オプション"><Caret w={13} h={7} /></button>
          </PaneHeader>
          <PaneTabs>
            <PaneTab aria-label="塗りつぶしと線">
              <Icon w={34} h={34} stroke={GREY} sw={1.5}>
                <path d="M16 9c10-2 16 6 11 20-1-6-1-11-7-15z" fill={GREY} stroke="none" />
                <path d="M1 18L13 5l14 12-13 13z" fill="#fff" /><path d="M9 10V2h6v10" /><circle cx="15" cy="13" r="2" fill={GREY} stroke="none" />
              </Icon>
            </PaneTab>
            <PaneTab $on aria-label="効果">
              <Icon w={34} h={38} stroke="#2b579a" sw={2}>
                <defs><linearGradient id="glow" x1="0" x2="0" y1="0" y2="1"><stop offset="0" stopColor="#6f9ad6" /><stop offset="1" stopColor="#b0b0b0" /></linearGradient></defs>
                <path d="M7 30h20l2 7H5z" fill="url(#glow)" stroke="none" />
                <path d="M17 3l14 10-5 17H8L3 13z" fill="#e2e9f5" />
              </Icon>
            </PaneTab>
            <PaneTab aria-label="レイアウトとプロパティ">
              <Icon w={32} h={34} stroke={GREY} sw={1.5}>
                <path d="M10 4h21M10.500 1v6M30.500 1v6M4.500 11v21M1 11h7M1 32h7" />
                <rect x="10" y="11" width="22" height="22" rx="1" fill={GREY} stroke="none" />
                <path d="M21 14v6M21 24v6M13 22h6M23 22h6M19 15.500l2-2 2 2M19 28.500l2 2 2-2M14.500 20l-2 2 2 2M27.500 20l2 2-2 2M20 22h2" stroke="#fff" />
              </Icon>
            </PaneTab>
          </PaneTabs>
          <Divider><Icon w={21} h={14} stroke="#c6c6c6"><path d="M0 14L10.500 1 21 14z" fill="#e6e6e6" stroke="none" /><path d="M.5 13L10.500 1l10 12" strokeWidth="1.500" /></Icon></Divider>
          <PaneBody>
            <Settings>
              <SectionToggle><Icon w={11} h={11}><path d="M11 0v11H0z" fill="#333" /></Icon>3-D 書式</SectionToggle>

              <Caption>面取り: 上(<u>T</u>)</Caption>
              <SettingRow>
                <PickerCell><Picker aria-label="面取り: 上"><BevelPreview /><Caret w={11} h={6} /></Picker></PickerCell>
                <Fields>
                  <SettingField id="topWidth" name="幅" letter="W" value="5 pt" />
                  <SettingField id="topHeight" name="高さ" letter="H" value="5 pt" />
                </Fields>
              </SettingRow>

              <Caption>面取り: 下(<u>B</u>)</Caption>
              <SettingRow>
                <PickerCell><Picker aria-label="面取り: 下"><BevelPreview flip /><Caret w={11} h={6} /></Picker></PickerCell>
                <Fields>
                  <SettingField id="bottomWidth" name="幅" letter="D" value="5 pt" />
                  <SettingField id="bottomHeight" name="高さ" letter="G" value="5 pt" />
                </Fields>
              </SettingRow>

              <Caption>奥行き(<u>E</u>)</Caption>
              <SettingRow>
                <PickerCell><Picker $small aria-label="奥行き"><ColorIcon bar="#fff" /><Caret w={11} h={6} /></Picker></PickerCell>
                <Fields><SettingField id="depthSize" name="サイズ" letter="S" value="5 pt" /></Fields>
              </SettingRow>

              <Caption>輪郭(<u>O</u>)</Caption>
              <SettingRow>
                <PickerCell><Picker $small aria-label="輪郭"><ColorIcon bar="#000" /><Caret w={11} h={6} /></Picker></PickerCell>
                <Fields><SettingField id="contourSize" name="サイズ" letter="I" value="0 pt" /></Fields>
              </SettingRow>

              <Caption>質感(<u>M</u>)</Caption>
              <SettingRow>
                <PickerCell><Picker aria-label="質感"><MaterialPreview /><Caret w={11} h={6} /></Picker></PickerCell>
              </SettingRow>

              <Caption>光源(<u>L</u>)</Caption>
            </Settings>
            <VerticalScroll>
              <VerticalPart $size={25} />
              <VerticalPart $track $grow={87} />
              <VerticalPart $grow={323} />
              <VerticalPart $track $grow={99} />
              <VerticalPart $size={25} />
            </VerticalScroll>
          </PaneBody>
          <HorizontalScroll>
            <HorizontalButton aria-label="左へ"><Icon w={6} h={12}><path d="M6 0v12L0 6z" fill="#555" /></Icon></HorizontalButton>
            <HorizontalThumb />
            <HorizontalButton aria-label="右へ"><Icon w={6} h={12}><path d="M0 0v12l6-6z" fill="#555" /></Icon></HorizontalButton>
          </HorizontalScroll>
          <Highlight />
        </Pane>
      </Workspace>
    </Shell>
  );
}
